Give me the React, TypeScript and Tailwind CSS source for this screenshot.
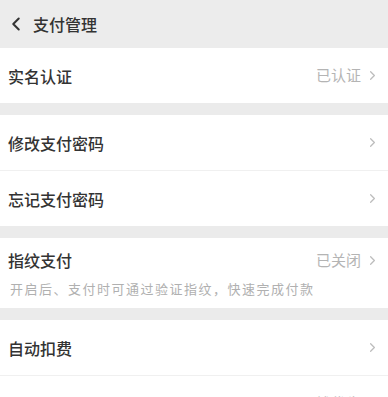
import { ChevronLeft, ChevronRight } from 'lucide-react';

type Row = { label: string; value?: string; note?: string };

const groups: Row[][] = [
  [{ label: '实名认证', value: '已认证' }],
  [{ label: '修改支付密码' }, { label: '忘记支付密码' }],
  [{ label: '指纹支付', value: '已关闭', note: '开启后、支付时可通过验证指纹，快速完成付款' }],
  [{ label: '自动扣费' }, { label: '默认扣费顺序', value: '零钱优先' }],
];

function Item({ row, last }: { row: Row; last: boolean }) {
  return (
    <div className={`bg-white pl-2 pr-2 ${last ? '' : 'border-b border-[#f0f0f0]'}`}>
      <div className={`flex items-center justify-between ${row.note ? 'h-[44px]' : 'h-[55px]'}`}>
        <span className="text-[16px] font-medium text-[#333]">{row.label}</span>
        <span className="flex items-center gap-1 text-[15px] text-[#b4b4b4]">
          {row.value}
          <ChevronRight size={15} strokeWidth={2} className="text-[#bdbdbd]" />
        </span>
      </div>
      {row.note && (
        <p className="pb-[13px] pl-[2px] text-[13px] tracking-[1.5px] text-[#b0b0b0] leading-none">{row.note}</p>
      )}
    </div>
  );
}

export default function App() {
  return (
    <div className="w-[388px] h-[397px] overflow-hidden bg-[#ebebeb] font-['Noto_Sans_CJK_SC','Noto_Sans',sans-serif]">
      <div className="h-[48px] flex items-center pl-[5px] bg-[#ececec]">
        <ChevronLeft size={22} strokeWidth={2.2} className="text-[#333]" />
        <span className="ml-[6px] text-[16px] font-medium text-[#333]">支付管理</span>
      </div>
      <div className="flex flex-col gap-[12px]">
        {groups.map((g, i) => (
          <div key={i}>
            {g.map((row, j) => (
              <Item key={row.label} row={row} last={j === g.length - 1} />
            ))}
          </div>
        ))}
      </div>
    </div>
  );
}
